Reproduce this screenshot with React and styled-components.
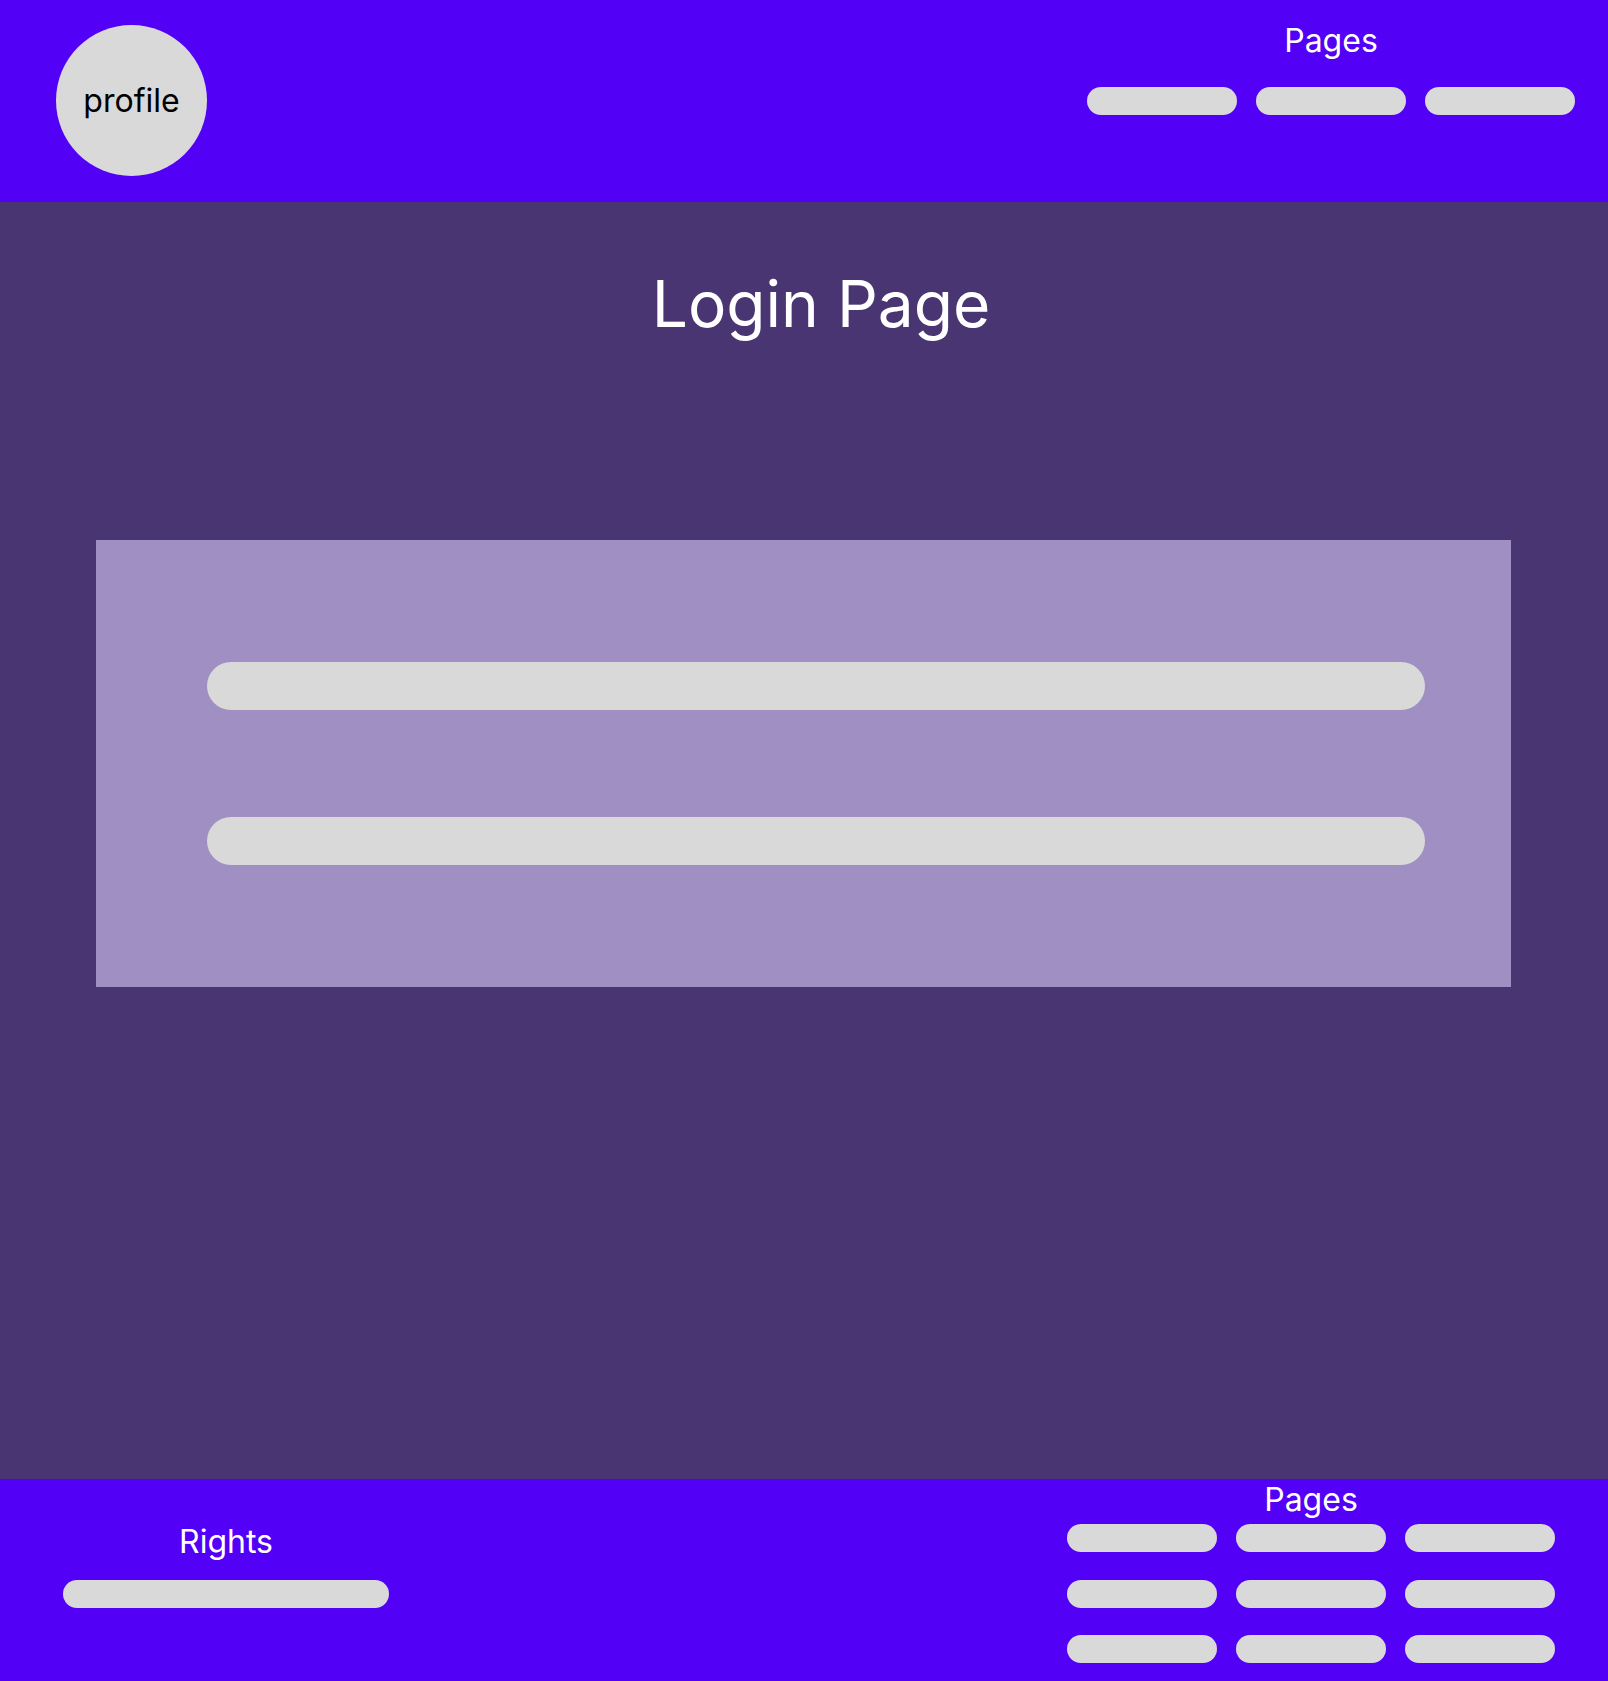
import React from 'react';
import styled, { createGlobalStyle } from 'styled-components';

const GlobalStyle = createGlobalStyle`
  html, body {
    margin: 0;
    padding: 0;
    background: #483572;
  }
  body {
    font-family: Inter, "Noto Sans", sans-serif;
  }
`;

const Page = styled.div`
  width: 1608px;
  display: flex;
  flex-direction: column;
`;

const Bar = styled.div`
  height: 202px;
  box-sizing: border-box;
  background: #5300f6;
  display: flex;
  justify-content: space-between;
  align-items: flex-start;
`;

const Header = styled(Bar)`
  padding: 25px 33px 0 56px;
`;

const Footer = styled(Bar)`
  padding: 0 53px 0 63px;
`;

const Profile = styled.div`
  width: 151px;
  height: 151px;
  border-radius: 50%;
  background: #d9d9d9;
  display: flex;
  align-items: center;
  justify-content: center;
  font-size: 32px;
  color: #000;
`;

const NavColumn = styled.nav`
  display: flex;
  flex-direction: column;
  align-items: center;
  margin-top: ${p => p.$top || 0}px;
`;

const NavTitle = styled.div`
  color: #fff;
  font-size: 32px;
  line-height: ${p => p.$lh}px;
  margin-bottom: ${p => p.$gap}px;
`;

const PillRow = styled.div`
  display: grid;
  grid-template-columns: repeat(3, 150px);
  column-gap: 19px;
  row-gap: 27.5px;
`;

const Pill = styled.div`
  width: ${p => p.$w || 150}px;
  height: 28px;
  border-radius: 14px;
  background: #d9d9d9;
`;

const Main = styled.main`
  height: 1277px;
  box-sizing: border-box;
  padding-top: 63px;
  display: flex;
  flex-direction: column;
`;

const Title = styled.h1`
  margin: 0 0 198px;
  padding-left: 34px;
  text-align: center;
  font-size: 64px;
  font-weight: 400;
  line-height: 77px;
  color: #fff;
`;

const Card = styled.form`
  margin: 0 97px 0 96px;
  height: 447px;
  box-sizing: border-box;
  padding: 122px 86px 0 111px;
  background: #a08fc2;
  display: flex;
  flex-direction: column;
  gap: 107px;
`;

const Field = styled.div`
  height: 48px;
  border-radius: 24px;
  background: #d9d9d9;
`;

const RightsBlock = styled.div`
  display: flex;
  flex-direction: column;
  align-items: center;
  margin-top: 43px;
`;

export default function App() {
  const footerLinks = Array.from({ length: 9 });
  return (
    <Page>
      <GlobalStyle />
      <Header>
        <Profile>profile</Profile>
        <NavColumn $top={-4}>
          <NavTitle $lh={39} $gap={27}>Pages</NavTitle>
          <PillRow>
            <Pill />
            <Pill />
            <Pill />
          </PillRow>
        </NavColumn>
      </Header>

      <Main>
        <Title>Login Page</Title>
        <Card>
          <Field />
          <Field />
        </Card>
      </Main>

      <Footer>
        <RightsBlock>
          <NavTitle $lh={39} $gap={19}>Rights</NavTitle>
          <Pill $w={326} />
        </RightsBlock>
        <NavColumn $top={5}>
          <NavTitle $lh={32} $gap={8}>Pages</NavTitle>
          <PillRow>
            {footerLinks.map((_, i) => (
              <Pill key={i} />
            ))}
          </PillRow>
        </NavColumn>
      </Footer>
    </Page>
  );
}
